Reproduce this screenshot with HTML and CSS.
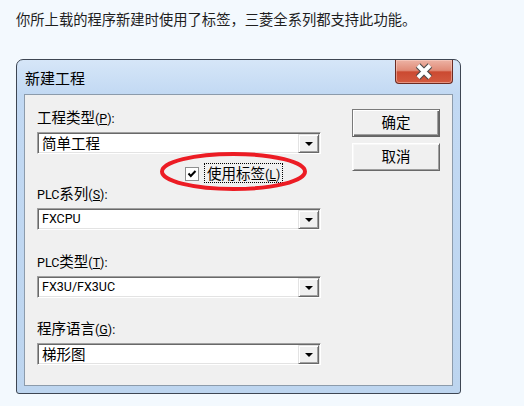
FILE: index.html
```html
<!DOCTYPE html>
<html lang="zh-CN">
<head>
<meta charset="utf-8">
<title>新建工程</title>
<link rel="stylesheet" href="styles.css">
</head>
<body>
<p class="intro">你所上载的程序新建时使用了标签，三菱全系列都支持此功能。</p>
<div class="dialog">
  <div class="titlebar">
    <span class="title">新建工程</span>
    <div class="close">
      <svg width="18" height="17" viewBox="0 0 18 17">
        <path d="M3 2.5 L15 14.5 M15 2.5 L3 14.5" stroke="#4a4a4a" stroke-width="6.2" fill="none"/>
        <path d="M3 2.5 L15 14.5 M15 2.5 L3 14.5" stroke="#ffffff" stroke-width="4" fill="none"/>
      </svg>
    </div>
  </div>
  <div class="client">
    <div class="fields">
      <div class="field">
        <div class="label">工程类型<span class="en">(<u>P</u>):</span></div>
        <div class="combo"><span class="value">简单工程</span><span class="drop"><i class="arrow"></i></span></div>
      </div>
      <div class="checkrow">
        <span class="checkbox">
          <svg width="12" height="12" viewBox="0 0 12 12"><path d="M2.5 5.5 L4.8 8 L9.5 3" stroke="#000" stroke-width="2" fill="none"/></svg>
        </span>
        <span class="focus">使用标签<span class="en">(<u>L</u>)</span></span>
        <svg class="mark" width="147" height="39" viewBox="0 0 147 39"><ellipse cx="73.5" cy="19.5" rx="71.5" ry="17.5" fill="none" stroke="#ec1c24" stroke-width="4"/></svg>
      </div>
      <div class="field">
        <div class="label"><span class="en">PLC</span>系列<span class="en">(<u>S</u>):</span></div>
        <div class="combo"><span class="value en">FXCPU</span><span class="drop"><i class="arrow"></i></span></div>
      </div>
      <div class="field f3">
        <div class="label"><span class="en">PLC</span>类型<span class="en">(<u>T</u>):</span></div>
        <div class="combo"><span class="value en">FX3U/FX3UC</span><span class="drop"><i class="arrow"></i></span></div>
      </div>
      <div class="field f4">
        <div class="label">程序语言<span class="en">(<u>G</u>):</span></div>
        <div class="combo"><span class="value">梯形图</span><span class="drop"><i class="arrow"></i></span></div>
      </div>
    </div>
    <div class="buttons">
      <div class="btn default">确定</div>
      <div class="btn">取消</div>
    </div>
  </div>
</div>
</body>
</html>
```
FILE: styles.css
```css
body {
  margin: 0;
  background: #f3f9fe;
  font-family: "Noto Sans CJK SC", sans-serif;
  color: #000;
}
.intro {
  margin: 0;
  padding: 9px 16px 0;
  font-size: 14.3px;
  line-height: 20px;
  color: #1e1e1e;
}
.dialog {
  margin: 30px 0 0 16px;
  width: 445px;
  height: 335px;
  box-sizing: border-box;
  border: 1px solid #3d4653;
  border-radius: 7px 7px 3px 3px;
  background: linear-gradient(to bottom, #d6e6f8 0, #c2d9f3 34px, #bdd5ef 100%);
  padding: 0 7px 7px;
  display: flex;
  flex-direction: column;
}
.titlebar {
  height: 34px;
  display: flex;
  align-items: center;
  justify-content: space-between;
}
.title {
  font-size: 15px;
  line-height: 20px;
  padding-left: 1px;
  margin-top: 1px;
}
.close {
  align-self: flex-start;
  width: 58px;
  height: 24px;
  box-sizing: border-box;
  border: 1px solid #6b2b22;
  border-top: none;
  border-radius: 0 0 4px 4px;
  background: linear-gradient(to bottom, #edb3a5 0, #e08b77 45%, #cb4a31 52%, #d35a40 100%);
  box-shadow: inset 0 0 0 1px rgba(255, 220, 210, 0.45);
  display: flex;
  align-items: center;
  justify-content: center;
}
.client {
  height: 292px;
  box-sizing: border-box;
  border: 1px solid #8c9bab;
  background: #f0f0f0;
  display: flex;
}
.fields {
  padding: 13px 0 0 12px;
  width: 284px;
}
.label {
  height: 18px;
  line-height: 18px;
  font-size: 14.5px;
  margin-bottom: 6px;
  white-space: nowrap;
}
.en {
  font-family: Roboto, "Liberation Sans", sans-serif;
  font-size: 12.5px;
}
.combo {
  width: 284px;
  height: 22px;
  box-sizing: border-box;
  border: 1px solid;
  border-color: #a0a0a0 #ffffff #ffffff #a0a0a0;
  box-shadow: inset 1px 1px 0 #696969, inset -1px -1px 0 #e3e3e3;
  background: #fff;
  display: flex;
  align-items: center;
}
.value {
  flex: 1;
  padding-left: 4px;
  font-size: 14.5px;
  line-height: 18px;
}
.value.en {
  font-size: 12.5px;
}
.drop {
  width: 21px;
  height: 19px;
  margin: 1px 1px 0 0;
  box-sizing: border-box;
  border: 1px solid;
  border-color: #e3e3e3 #696969 #696969 #e3e3e3;
  box-shadow: inset 1px 1px 0 #ffffff, inset -1px -1px 0 #a0a0a0;
  background: #f0f0f0;
  display: flex;
  align-items: center;
  justify-content: center;
}
.arrow {
  width: 0;
  height: 0;
  border-top: 4px solid #000;
  border-left: 4px solid transparent;
  border-right: 4px solid transparent;
  margin-top: 1px;
}
.checkrow {
  position: relative;
  height: 30px;
  box-sizing: border-box;
  padding: 9px 0 0 148px;
  display: flex;
  align-items: flex-start;
}
.checkbox {
  width: 14px;
  height: 14px;
  margin-top: 4px;
  margin-right: 5px;
  box-sizing: border-box;
  border: 1px solid #8e8f8f;
  background: #fff;
  display: flex;
  align-items: center;
  justify-content: center;
}
.focus {
  height: 20px;
  box-sizing: border-box;
  border: 1px dotted #000;
  padding: 0 2px;
  line-height: 18px;
  font-size: 14.5px;
  white-space: nowrap;
}
.mark {
  position: absolute;
  left: 123px;
  top: -2px;
  pointer-events: none;
}
.f3 {
  margin-top: 22px;
}
.f4 {
  margin-top: 21px;
}
.buttons {
  margin-left: 31px;
  padding-top: 14px;
  display: flex;
  flex-direction: column;
  gap: 6px;
}
.btn {
  width: 88px;
  height: 28px;
  box-sizing: border-box;
  border: 1px solid;
  border-color: #ffffff #696969 #696969 #ffffff;
  box-shadow: inset 1px 1px 0 #f7f7f7, inset -1px -1px 0 #a0a0a0;
  background: #f0f0f0;
  font-size: 14.5px;
  line-height: 18px;
  display: flex;
  align-items: center;
  justify-content: center;
  padding-bottom: 2px;
}
.btn.default {
  border-color: #7a7a7a #646464 #646464 #7a7a7a;
  box-shadow: inset 1px 1px 0 #ffffff, inset -1px -1px 0 #696969, inset -2px -2px 0 #a0a0a0;
}
```
